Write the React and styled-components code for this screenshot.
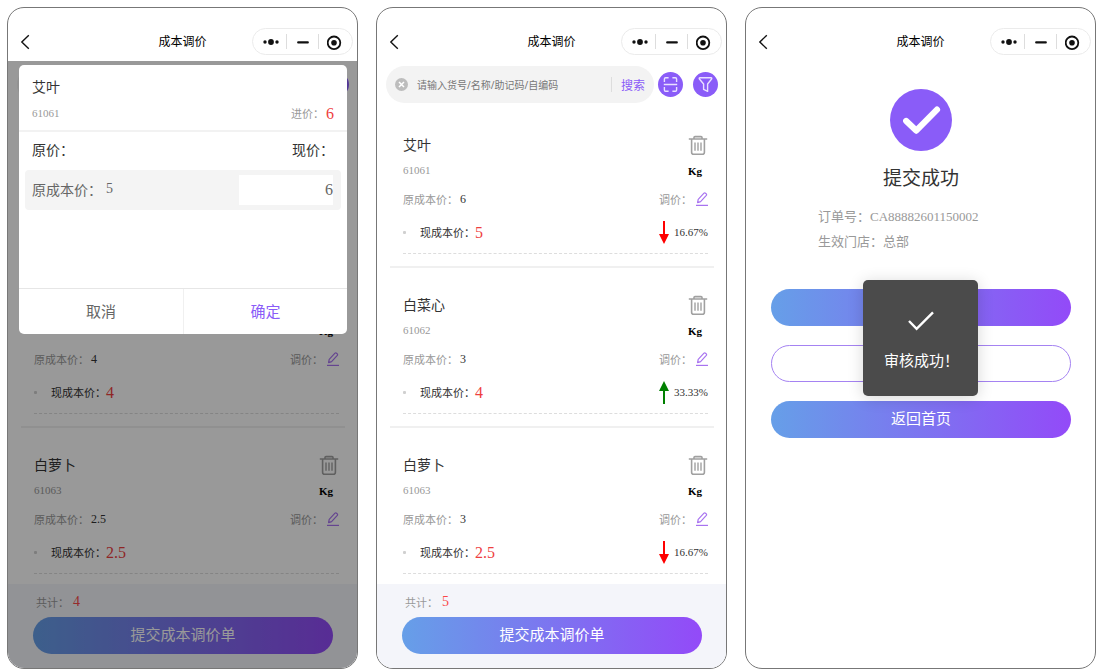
import { useState } from 'react'
import styled, { createGlobalStyle } from 'styled-components'

const GlobalStyle = createGlobalStyle`
  * {
    box-sizing: border-box;
  }
  body {
    margin: 0;
    background: #fff;
    color: #333;
    font-family: 'Liberation Serif', 'Noto Sans CJK SC', sans-serif;
    font-size: 11px;
  }
  button,
  input {
    font-family: inherit;
    border: 0;
    padding: 0;
    background: none;
    outline: none;
  }
  button {
    cursor: pointer;
  }
  svg {
    display: block;
  }
  h1, h2, p, ul {
    margin: 0;
    padding: 0;
    font-weight: normal;
  }
`

const Page = styled.main`
  display: grid;
  grid-template-columns: repeat(3, minmax(0, 1fr));
  gap: 18px;
  height: 100vh;
  padding: 7px 5px 2px 7px;
`
const Phone = styled.section`
  position: relative;
  display: flex;
  flex-direction: column;
  min-height: 0;
  border: 1px solid #777;
  border-radius: 17px;
  background: #fff;
  overflow: hidden;
`

/* header */
const Header = styled.header`
  display: grid;
  grid-template-columns: 1fr auto 1fr;
  align-items: center;
  flex: none;
  padding: 20px 4px 6px;
`
const Title = styled.h1`
  font-size: 12px;
  line-height: 20px;
  color: #000;
`
const BackButton = styled.button`
  justify-self: start;
  padding: 0 8px;
`
const Capsule = styled.div`
  justify-self: end;
  display: flex;
  align-items: center;
  height: 27px;
  padding: 0 2px;
  border: 1px solid #ebebeb;
  border-radius: 14px;
  background: #fff;
`
const CapsuleButton = styled.button`
  display: flex;
  justify-content: center;
  width: 31px;
`
const Divider = styled.span`
  width: 1px;
  height: 15px;
  background: #ddd;
`

/* search */
const SearchRow = styled.div`
  display: flex;
  align-items: center;
  flex: none;
  gap: 10px;
  padding: 5px 8px 5px 9px;
`
const SearchGroup = styled.div`
  display: flex;
  align-items: center;
  flex: 1;
  gap: 4px;
  min-width: 0;
`
const SearchBox = styled.div`
  display: flex;
  align-items: center;
  flex: 1;
  gap: 9px;
  min-width: 0;
  height: 37px;
  padding: 0 9px 0 9px;
  border-radius: 19px;
  background: #f3f3f3;
`
const SearchInput = styled.input`
  flex: 1;
  min-width: 0;
  font-family: 'Noto Sans', 'Noto Sans CJK SC', sans-serif;
  font-size: 10px;
  color: #333;
  &::placeholder {
    color: #777;
    opacity: 1;
  }
`
const SearchButton = styled.button`
  font-size: 12px;
  color: #8a5cf8;
`
const RoundButton = styled.button`
  display: flex;
  align-items: center;
  justify-content: center;
  flex: none;
  width: 25px;
  height: 25px;
  border-radius: 50%;
  background: #8a5cf8;
`

/* goods list */
const List = styled.ul`
  flex: 1;
  min-height: 0;
  padding: 0 12px 0 13px;
  list-style: none;
  overflow-y: auto;
  scrollbar-width: none;
`
const Item = styled.li`
  padding: 24px 6px 12px 13px;
  border-bottom: 2px solid #f0f0f0;
`
const ItemBody = styled.div`
  padding-bottom: 5px;
  border-bottom: 1px dashed #ddd;
`
const Row = styled.div`
  display: flex;
  align-items: center;
  justify-content: space-between;
  height: ${p => p.$height}px;
`
const Cell = styled.div`
  display: flex;
  align-items: center;
  gap: ${p => p.$gap || 0}px;
`
const Name = styled.h2`
  padding-bottom: 3px;
  font-size: 14px;
  color: #333;
`
const Muted = styled.span`
  color: #999;
`
const Unit = styled.b`
  padding: 2px 6px 0 0;
  color: #000;
`
const OldPrice = styled.span`
  font-size: 12px;
  color: #333;
`
const Price = styled.span`
  padding-top: 2px;
  font-size: 16px;
  color: #ee3f3f;
`
const Bullet = styled.span`
  width: 3px;
  height: 3px;
  margin-right: 14px;
  border-radius: 1px;
  background: #d0d0d0;
`

/* bottom */
const Footer = styled.footer`
  flex: none;
  padding: 3px 24px 14px 25px;
  background: #f4f5fa;
`
const Total = styled.p`
  display: flex;
  align-items: center;
  gap: 4px;
  height: 30px;
  padding-left: 3px;
  color: #999;
`
const TotalValue = styled.span`
  font-size: 14px;
  color: #fa4848;
`
const PillButton = styled.button`
  display: block;
  width: 100%;
  height: 37px;
  padding-bottom: 4px;
  border-radius: 19px;
  font-size: 15px;
  color: #fff;
  background: linear-gradient(90deg, #669fe8, #934af8);
`
const OutlineButton = styled(PillButton)`
  border: 1px solid #a583f2;
  color: #8a5cf8;
  background: #fff;
`

/* edit dialog */
const Mask = styled.div`
  position: absolute;
  inset: 53px 0 0;
  padding: 4px 10px 0 11px;
  background: rgba(0, 0, 0, 0.4);
`
const Dialog = styled.form`
  border-radius: 5px;
  background: #fff;
  overflow: hidden;
`
const DialogTop = styled.div`
  padding: 9px 13px 5px;
  border-bottom: 2px solid #f2f2f2;
`
const DialogBody = styled.div`
  min-height: 156px;
  padding: 0 6px;
`
const Heads = styled(Row)`
  margin-bottom: 2px;
  padding: 0 7px 2px;
  font-size: 14px;
`
const PriceBox = styled.div`
  display: flex;
  align-items: center;
  justify-content: space-between;
  height: 40px;
  padding: 0 8px 0 7px;
  border-radius: 4px;
  background: #f4f4f4;
  font-size: 14px;
  color: #666;
`
const OldCost = styled(Cell)`
  padding-bottom: 3px;
`
const PriceInput = styled.input`
  width: 94px;
  height: 30px;
  background: #fff;
  color: #666;
  font-size: 16px;
  text-align: right;
`
const DialogActions = styled.div`
  display: grid;
  grid-template-columns: 1fr 1fr;
  border-top: 1px solid #e6e6e6;
`
const DialogButton = styled.button`
  height: 45px;
  padding-bottom: 3px;
  font-size: 15px;
  color: ${p => (p.$primary ? '#8a5cf8' : '#666')};
  & + & {
    border-left: 1px solid #f0f0f0;
  }
`

/* result */
const Result = styled.div`
  display: flex;
  flex-direction: column;
  align-items: center;
  padding: 28px 24px 0 25px;
`
const ResultTitle = styled.h2`
  margin-top: 14px;
  font-size: 19px;
  line-height: 28px;
`
const ResultInfo = styled.div`
  align-self: stretch;
  margin: 11px 0 35px;
  padding-left: 47px;
  font-size: 13px;
  line-height: 25px;
  color: #999;
`
const ResultActions = styled.div`
  display: flex;
  flex-direction: column;
  align-self: stretch;
  gap: 19px;
`
const ToastLayer = styled.div`
  position: absolute;
  inset: 0;
  display: grid;
  place-items: center;
  pointer-events: none;
`
const Toast = styled.div`
  display: flex;
  flex-direction: column;
  align-items: center;
  gap: 18px;
  padding: 30px 21px 24px;
  border-radius: 5px;
  background: #4b4b4b;
  box-shadow: 0 2px 16px rgba(0, 0, 0, 0.16);
  color: #fff;
  font-size: 15px;
  line-height: 22px;
  white-space: nowrap;
`
const ToastText = styled.span`
  width: 73px;
`

const BackIcon = () => (
  <svg width='10' height='16' viewBox='0 0 10 16' fill='none' stroke='#111' strokeWidth='1.4'>
    <path d='M8.8 1.2 1.8 8l7 6.8' />
  </svg>
)
const DotsIcon = () => (
  <svg width='16' height='8' viewBox='0 0 16 8' fill='#111'>
    <circle cx='2' cy='4' r='1.7' />
    <circle cx='8' cy='4' r='2.9' />
    <circle cx='14' cy='4' r='1.7' />
  </svg>
)
const MinusIcon = () => (
  <svg width='12' height='4' viewBox='0 0 12 4'>
    <path d='M1.2 2.4h9.6' stroke='#111' strokeWidth='2.2' strokeLinecap='round' />
  </svg>
)
const TargetIcon = () => (
  <svg width='15' height='16' viewBox='0 0 15 16'>
    <circle cx='7' cy='8.8' r='6.3' fill='none' stroke='#111' strokeWidth='1.8' />
    <circle cx='7' cy='8.8' r='2.8' fill='#111' />
  </svg>
)
const ClearIcon = () => (
  <svg width='13' height='13' viewBox='0 0 13 13'>
    <circle cx='6.5' cy='6.5' r='6.5' fill='#bdbdbd' />
    <path d='m4 4 5 5M9 4 4 9' stroke='#fff' strokeWidth='1.5' />
  </svg>
)
const ScanIcon = () => (
  <svg width='17' height='17' viewBox='0 0 17 17' fill='none' stroke='#e9e0ff' strokeWidth='1.4'>
    <path d='M2.4 6V3q0-1.2 1.2-1.2H6.6M10.4 1.8h3q1.2 0 1.2 1.2V6M14.6 11v3q0 1.2-1.2 1.2h-3M6.6 15.2H3.6q-1.2 0-1.2-1.2V11M1.8 8.5h13.4' />
  </svg>
)
const FilterIcon = () => (
  <svg width='17' height='17' viewBox='0 0 17 17' fill='none' stroke='#e9e0ff' strokeWidth='1.4' strokeLinejoin='round'>
    <path d='M3 1.8h11q1.2 0 .6 1.2L10.6 8v7.4l-4-2V8L2.4 3Q1.8 1.8 3 1.8Z' />
  </svg>
)
const TrashIcon = () => (
  <svg width='20' height='20' viewBox='0 0 20 20' fill='none' stroke='#a0a0a0' strokeWidth='1.6'>
    <path d='M.8 4h18.4M6 4V2.6q0-1 1-1h6q1 0 1 1V4M3.6 4v13.2q0 2 2 2h8.8q2 0 2-2V4' />
    <path d='M7 7.4v8.4M10 7.4v8.4M13 7.4v8.4' strokeWidth='1.4' />
  </svg>
)
const PencilIcon = () => (
  <svg width='12' height='14' viewBox='0 0 12 14' fill='none' stroke='#a873f0' strokeWidth='1.2'>
    <path d='m1.6 10.6.6-3.2L8 1.2q.7-.7 1.5 0l.7.6q.8.8.1 1.6L4.6 9.6Z' strokeLinejoin='round' />
    <path d='M0 13.4h12' />
  </svg>
)
const TrendIcon = ({ up }) => (
  <svg width='10' height='23' viewBox='0 0 10 23' fill={up ? '#008000' : '#f00'}>
    {up ? <path d='M5 0 10 10H6v13H4V10H0Z' /> : <path d='M5 23 0 13h4V0h2v13h4Z' />}
  </svg>
)
const SuccessIcon = () => (
  <svg width='62' height='62' viewBox='0 0 62 62'>
    <circle cx='31' cy='31' r='31' fill='#8a5cf8' />
    <path d='m16.2 32 10 9.6 20.8-21' fill='none' stroke='#fff' strokeWidth='6.2' strokeLinecap='round' strokeLinejoin='round' />
  </svg>
)
const CheckIcon = () => (
  <svg width='26' height='22' viewBox='0 0 26 22' fill='none' stroke='#fff' strokeWidth='2.4'>
    <path d='m1 11 7.6 7.8L25 2.4' />
  </svg>
)

const AppHeader = () => (
  <Header>
    <BackButton aria-label='返回'>
      <BackIcon />
    </BackButton>
    <Title>成本调价</Title>
    <Capsule>
      <CapsuleButton aria-label='更多'>
        <DotsIcon />
      </CapsuleButton>
      <Divider />
      <CapsuleButton aria-label='最小化'>
        <MinusIcon />
      </CapsuleButton>
      <Divider />
      <CapsuleButton aria-label='关闭'>
        <TargetIcon />
      </CapsuleButton>
    </Capsule>
  </Header>
)

const GoodsItem = ({ name, code, cost, current, trend, rate }) => (
  <Item>
    <ItemBody>
      <Row $height={26}>
        <Name>{name}</Name>
        <button aria-label='删除'>
          <TrashIcon />
        </button>
      </Row>
      <Row $height={24}>
        <Muted>{code}</Muted>
        <Unit>Kg</Unit>
      </Row>
      <Row $height={34}>
        <Cell $gap={2}>
          <Muted>原成本价：</Muted>
          <OldPrice>{cost}</OldPrice>
        </Cell>
        <Cell $gap={4}>
          <Muted>调价：</Muted>
          <button aria-label='调价'>
            <PencilIcon />
          </button>
        </Cell>
      </Row>
      <Row $height={32}>
        <Cell>
          <Bullet />
          <span>现成本价：</span>
          <Price>{current}</Price>
        </Cell>
        {rate && (
          <Cell $gap={5}>
            <TrendIcon up={trend === 'up'} />
            <span>{rate}</span>
          </Cell>
        )}
      </Row>
    </ItemBody>
  </Item>
)

const GoodsScreen = ({ goods, total, children }) => {
  const [keyword, setKeyword] = useState('')
  return (
    <Phone>
      <AppHeader />
      <SearchRow>
        <SearchGroup>
          <SearchBox>
            <button aria-label='清空' onClick={() => setKeyword('')}>
              <ClearIcon />
            </button>
            <SearchInput
              aria-label='搜索商品'
              placeholder='请输入货号/名称/助记码/自编码'
              value={keyword}
              onChange={e => setKeyword(e.target.value)}
            />
            <Divider />
            <SearchButton>搜索</SearchButton>
          </SearchBox>
          <RoundButton aria-label='扫码'>
            <ScanIcon />
          </RoundButton>
        </SearchGroup>
        <RoundButton aria-label='筛选'>
          <FilterIcon />
        </RoundButton>
      </SearchRow>
      <List>
        {goods.map(g => (
          <GoodsItem key={g.code} {...g} />
        ))}
      </List>
      <Footer>
        <Total>
          共计：<TotalValue>{total}</TotalValue>
        </Total>
        <PillButton>提交成本调价单</PillButton>
      </Footer>
      {children}
    </Phone>
  )
}

const EditDialog = () => {
  const [price, setPrice] = useState('6')
  return (
    <Mask>
      <Dialog onSubmit={e => e.preventDefault()}>
        <DialogTop>
          <Row $height={27}>
            <Name>艾叶</Name>
          </Row>
          <Row $height={24}>
            <Muted>61061</Muted>
            <Cell $gap={2}>
              <Muted>进价：</Muted>
              <Price>6</Price>
            </Cell>
          </Row>
        </DialogTop>
        <DialogBody>
          <Heads $height={36}>
            <span>原价：</span>
            <label htmlFor='new-price'>现价：</label>
          </Heads>
          <PriceBox>
            <OldCost $gap={4}>
              <span>原成本价：</span>
              <span>5</span>
            </OldCost>
            <PriceInput id='new-price' value={price} onChange={e => setPrice(e.target.value)} />
          </PriceBox>
        </DialogBody>
        <DialogActions>
          <DialogButton type='button'>取消</DialogButton>
          <DialogButton type='submit' $primary>
            确定
          </DialogButton>
        </DialogActions>
      </Dialog>
    </Mask>
  )
}

const ResultScreen = () => (
  <Phone>
    <AppHeader />
    <Result>
      <SuccessIcon />
      <ResultTitle>提交成功</ResultTitle>
      <ResultInfo>
        <p>订单号：CA88882601150002</p>
        <p>生效门店：总部</p>
      </ResultInfo>
      <ResultActions>
        <PillButton aria-label='审核' />
        <OutlineButton aria-label='查看详情' />
        <PillButton>返回首页</PillButton>
      </ResultActions>
    </Result>
    <ToastLayer>
      <Toast role='status'>
        <CheckIcon />
        <ToastText>审核成功！</ToastText>
      </Toast>
    </ToastLayer>
  </Phone>
)

const draftGoods = [
  { name: '艾叶', code: '61061', cost: '5', current: '5' },
  { name: '白菜心', code: '61062', cost: '4', current: '4' },
  { name: '白萝卜', code: '61063', cost: '2.5', current: '2.5' }
]

const changedGoods = [
  { name: '艾叶', code: '61061', cost: '6', current: '5', trend: 'down', rate: '16.67%' },
  { name: '白菜心', code: '61062', cost: '3', current: '4', trend: 'up', rate: '33.33%' },
  { name: '白萝卜', code: '61063', cost: '3', current: '2.5', trend: 'down', rate: '16.67%' }
]

const App = () => (
  <>
    <GlobalStyle />
    <Page>
      <GoodsScreen goods={draftGoods} total={4}>
        <EditDialog />
      </GoodsScreen>
      <GoodsScreen goods={changedGoods} total={5} />
      <ResultScreen />
    </Page>
  </>
)

export default App
